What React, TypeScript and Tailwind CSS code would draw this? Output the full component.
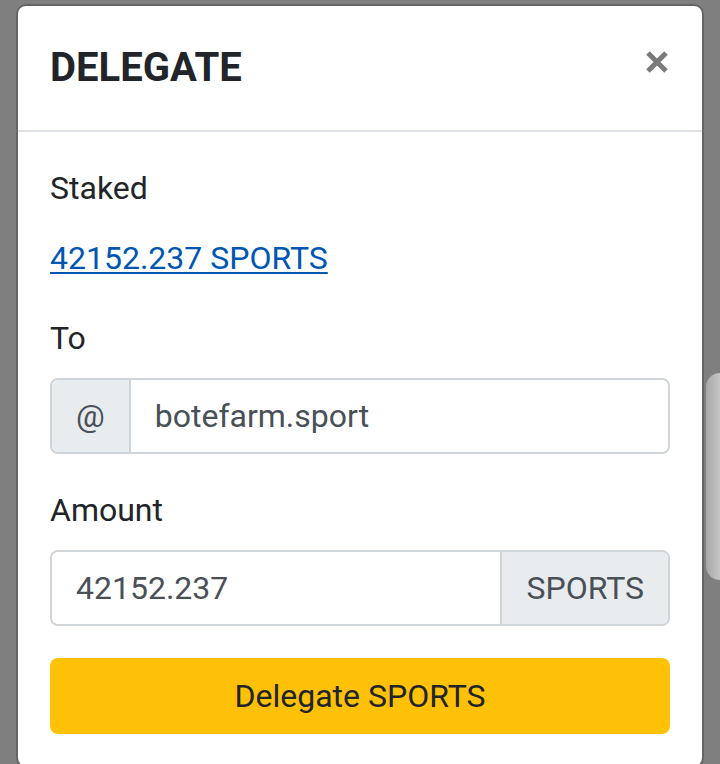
const font = { fontFamily: "Roboto, 'Noto Sans', sans-serif" };

const CloseIcon = () => (
  <svg width="22" height="22" viewBox="0 0 22 22" aria-hidden="true">
    <path d="M2 2 L20 20 M20 2 L2 20" stroke="#7a7a7a" strokeWidth="5" strokeLinecap="butt" />
  </svg>
);

export default function App() {
  return (
    <div className="relative h-[764px] w-full overflow-hidden bg-[#7f7f7f]" style={font}>
      {/* modal */}
      <div className="mx-4 mt-[4px] rounded-[10px] border-2 border-black/20 bg-white bg-clip-padding">
        {/* header */}
        <div className="flex items-start justify-between border-b-2 border-[#dee2e6] p-[32px]">
          <h5 className="text-[40px] font-bold leading-[60px] text-[#212529]">DELEGATE</h5>
          <button className="mt-[13px] mr-[2px]">
            <CloseIcon />
          </button>
        </div>

        {/* body */}
        <div className="p-[32px] text-[32px] leading-[48px] text-[#212529]">
          <div className="mb-[22px]">Staked</div>
          <a
            href="#"
            className="mb-[32px] block w-max text-[#0056b3] underline decoration-[2px] underline-offset-[3px]"
          >
            42152.237 SPORTS
          </a>

          <div className="mb-[16px]">To</div>
          <div className="mb-[32px] flex h-[76px] overflow-hidden rounded-[8px] border-2 border-[#ced4da]">
            <span className="flex items-center border-r-2 border-[#ced4da] bg-[#e9ecef] px-[24px] text-[#495057]">
              @
            </span>
            <input
              readOnly
              defaultValue="botefarm.sport"
              className="min-w-0 flex-1 bg-white px-[24px] text-[#495057] outline-none"
            />
          </div>

          <div className="mb-[16px]">Amount</div>
          <div className="mb-[32px] flex h-[76px] overflow-hidden rounded-[8px] border-2 border-[#ced4da]">
            <input
              readOnly
              defaultValue="42152.237"
              className="min-w-0 flex-1 bg-white px-[24px] text-[#495057] outline-none"
            />
            <span className="flex items-center border-l-2 border-[#ced4da] bg-[#e9ecef] px-[24px] text-[#495057]">
              SPORTS
            </span>
          </div>

          <button className="h-[76px] w-full rounded-[8px] bg-[#ffc107] text-center text-[#212529]">
            Delegate SPORTS
          </button>
        </div>
      </div>

      {/* page element peeking behind backdrop */}
      <div className="absolute right-0 top-[373px] h-[207px] w-[14px] rounded-l-[14px] bg-linear-to-r from-[#a8a8a8] to-[#c6c6c6]" />
    </div>
  );
}
